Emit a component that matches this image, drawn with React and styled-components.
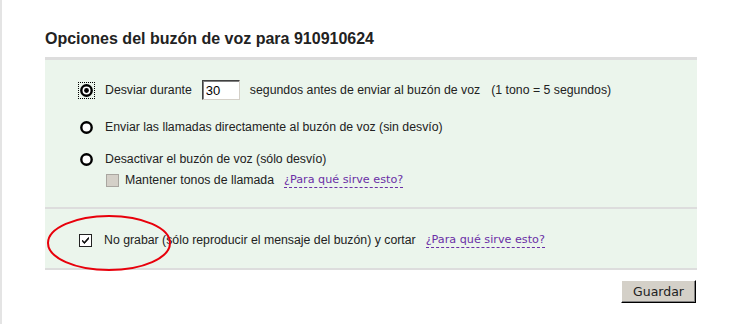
import React from "react";
import styled, { createGlobalStyle } from "styled-components";

const Global = createGlobalStyle`
  html, body { margin: 0; padding: 0; background: #fff; }
  body { font-family: "Liberation Sans", Arial, sans-serif; color: #222; }
`;

const Page = styled.div`
  box-sizing: border-box;
  min-height: 324px;
  width: 742px;
  border-left: 2px solid #e4e4e4;
  padding: 29px 0 0 43px;
`;

const Title = styled.h1`
  margin: 0;
  font-family: "Liberation Sans", Arial, sans-serif;
  font-weight: bold;
  font-size: 16px;
  line-height: 19px;
  color: #222;
  height: 28px;
`;

const Panel = styled.div`
  width: 652px;
  background: #ebf5ec;
  border-top: 3px solid #dddddd;
  border-bottom: 2px solid #dddddd;
`;

const Section = styled.div`
  position: relative;
  padding: ${(p) => p.$pad};
  border-top: ${(p) => (p.$divided ? "2px solid #dddddd" : "none")};
`;

const Row = styled.div`
  display: flex;
  align-items: center;
  height: ${(p) => p.$h || 16}px;
  margin-top: ${(p) => p.$mt || 0}px;
  margin-left: ${(p) => p.$ml || 0}px;
  font-size: 12.3px;
  line-height: 16px;
  white-space: nowrap;
`;

const Label = styled.span`
  margin-left: ${(p) => p.$ml || 0}px;
  color: #222;
`;

const RadioWrap = styled.span`
  display: inline-flex;
  width: 13px;
  height: 13px;
  outline: ${(p) => (p.$focus ? "1px dotted #000" : "none")};
  outline-offset: 1px;
`;

const Radio = ({ checked, focus }) => (
  <RadioWrap $focus={focus}>
    <svg width="13" height="13" viewBox="0 0 13 13">
      <circle cx="6.5" cy="6.5" r="5.2" fill="#fff" stroke="#000" strokeWidth="2.4" />
      {checked && <circle cx="6.5" cy="6.5" r="2.4" fill="#000" />}
    </svg>
  </RadioWrap>
);

const Box = styled.span`
  box-sizing: border-box;
  display: inline-flex;
  align-items: center;
  justify-content: center;
  width: 13px;
  height: 13px;
  background: ${(p) => (p.$disabled ? "#d4d0c8" : "#fff")};
  border: 1px solid ${(p) => (p.$disabled ? "#a9a6a0" : "#222")};
`;

const Check = ({ checked, disabled }) => (
  <Box $disabled={disabled}>
    {checked && (
      <svg width="9" height="9" viewBox="0 0 9 9">
        <path d="M1.5 4.2 L3.4 6.2 L7.5 1.5 L7.5 3 L3.4 7.6 L1.5 5.6 Z" fill="#000" stroke="#000" strokeWidth="0.8" />
      </svg>
    )}
  </Box>
);

const Seconds = styled.input`
  box-sizing: border-box;
  width: 38px;
  height: 20px;
  margin-left: 10px;
  padding: 0 3px;
  font-family: "Liberation Sans", Arial, sans-serif;
  font-size: 13px;
  color: #000;
  background: #fff;
  border: 1px solid;
  border-color: #404040 #d4d0c8 #d4d0c8 #404040;
  box-shadow: inset 1px 1px 0 #808080;
  outline: none;
`;

const Help = styled.a`
  margin-left: ${(p) => p.$ml || 10}px;
  font-family: "DejaVu Sans", Verdana, sans-serif;
  font-size: 11.2px;
  line-height: 14px;
  color: #6a2fa6;
  text-decoration: none;
  border-bottom: 1px dashed #6a2fa6;
  cursor: help;
`;

const Circle = styled.svg`
  position: absolute;
  left: 2px;
  top: 6px;
  overflow: visible;
  pointer-events: none;
`;

const Actions = styled.div`
  display: flex;
  justify-content: flex-end;
  width: 652px;
  padding-top: 10px;
`;

const Button = styled.button`
  box-sizing: border-box;
  width: 75px;
  height: 23px;
  margin-right: 1px;
  padding: 0;
  font-family: "DejaVu Sans", Verdana, sans-serif;
  font-size: 12.5px;
  color: #222;
  background: #d4d0c8;
  border: 1px solid;
  border-color: #ffffff #000000 #000000 #ffffff;
  box-shadow: inset -1px -1px 0 #808080;
`;

export default function App() {
  return (
    <>
      <Global />
      <Page>
        <Title>Opciones del buzón de voz para 910910624</Title>
        <Panel>
          <Section $pad="19px 0 19px 35px">
            <Row $h={22}>
              <Radio checked focus />
              <Label $ml={12}>Desviar durante</Label>
              <Seconds defaultValue="30" />
              <Label $ml={10}>segundos antes de enviar al buzón de voz</Label>
              <Label $ml={11}>(1 tono = 5 segundos)</Label>
            </Row>
            <Row $mt={18}>
              <Radio />
              <Label $ml={12}>Enviar las llamadas directamente al buzón de voz (sin desvío)</Label>
            </Row>
            <Row $mt={16}>
              <Radio />
              <Label $ml={12}>Desactivar el buzón de voz (sólo desvío)</Label>
            </Row>
            <Row $mt={5} $ml={26}>
              <Check disabled />
              <Label $ml={6}>Mantener tonos de llamada</Label>
              <Help href="#">¿Para qué sirve esto?</Help>
            </Row>
          </Section>
          <Section $divided $pad="23px 0 20px 34px">
            <Row>
              <Check checked />
              <Label $ml={12}>No grabar (sólo reproducir el mensaje del buzón) y cortar</Label>
              <Help href="#">¿Para qué sirve esto?</Help>
            </Row>
            <Circle width="122" height="56" viewBox="0 0 122 56">
              <ellipse cx="62" cy="28" rx="61" ry="27" fill="none" stroke="#e8000b" strokeWidth="2" />
            </Circle>
          </Section>
        </Panel>
        <Actions>
          <Button>Guardar</Button>
        </Actions>
      </Page>
    </>
  );
}
